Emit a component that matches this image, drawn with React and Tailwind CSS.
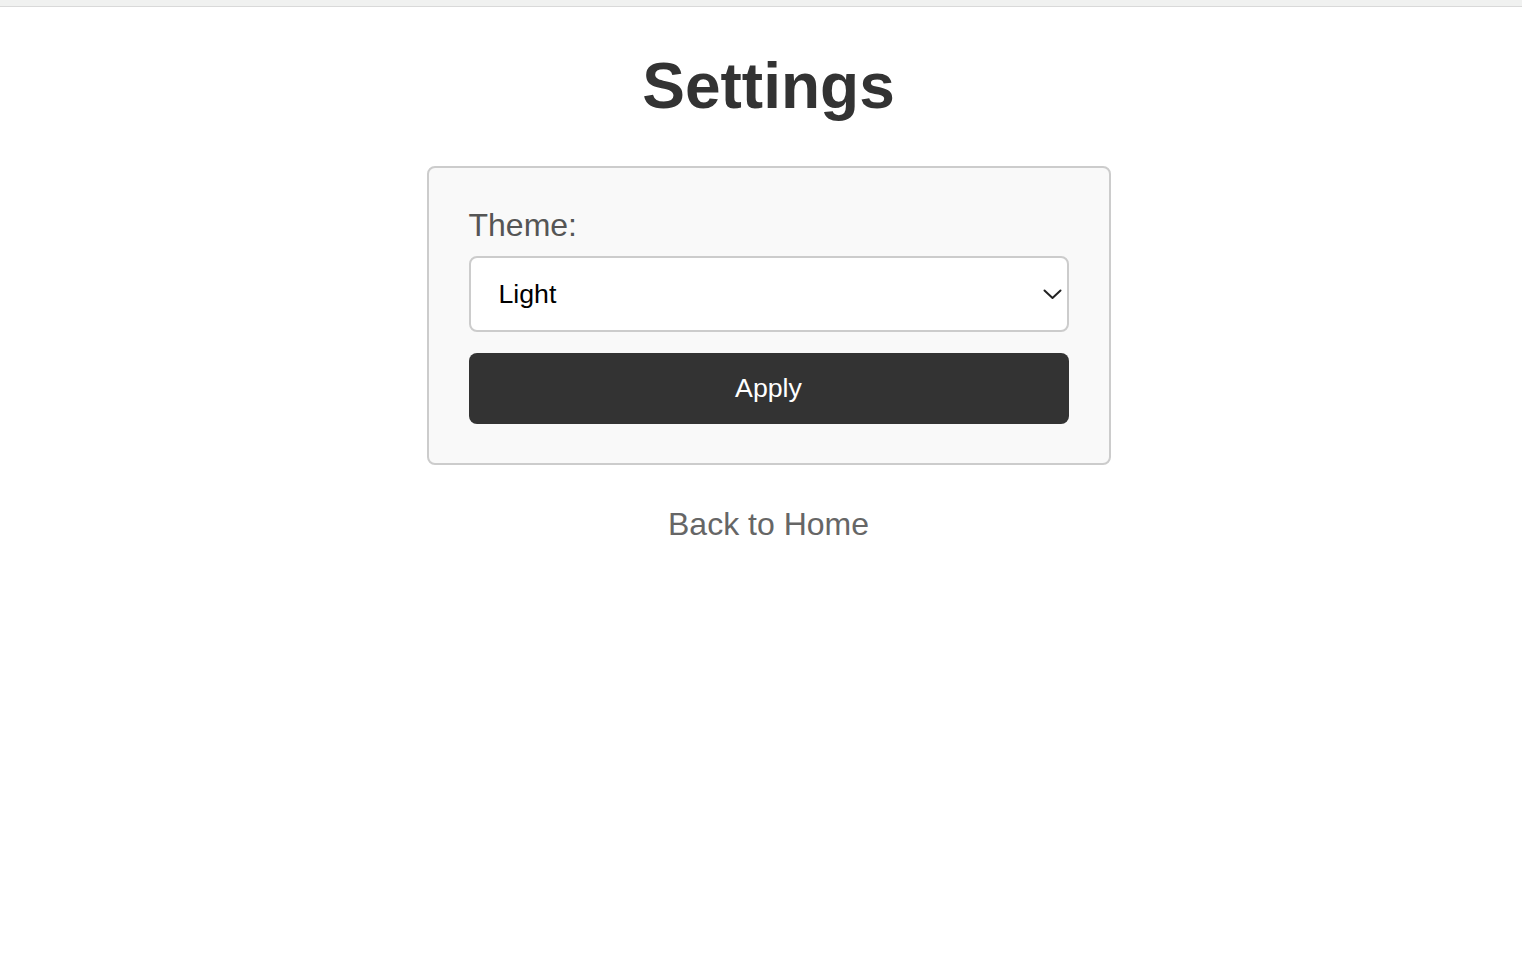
export default function App() {
  return (
    <div className="min-h-[958px] bg-white" style={{ fontFamily: '"Liberation Sans", Arial, sans-serif' }}>
      <div className="h-[7px] bg-[#f0f1f0] border-b border-[#d9d9d9]" />
      <div className="flex flex-col items-center pl-[15px]">
        <h1 className="mt-[42px] text-[64px] leading-[74px] font-bold text-[#333333]">Settings</h1>
        <div className="mt-[43px] w-[684px] rounded-[8px] border-2 border-[#cccccc] bg-[#f9f9f9] px-[40px] pt-[39px] pb-[39px] flex flex-col">
          <label className="text-[32px] leading-[37px] text-[#555555]">Theme:</label>
          <div className="relative mt-[12px]">
            <select
              defaultValue="light"
              className="appearance-none w-full h-[76px] rounded-[8px] border-2 border-[#cccccc] bg-white pl-[28px] text-[26.7px] text-black outline-none"
              style={{ fontFamily: '"Liberation Sans", Arial, sans-serif' }}
            >
              <option value="light">Light</option>
              <option value="dark">Dark</option>
            </select>
            <svg className="absolute right-[7px] top-[33px] pointer-events-none" width="19" height="11" viewBox="0 0 19 11" fill="none">
              <path d="M1.5 1.5 L9.5 9 L17.5 1.5" stroke="#222" strokeWidth="2" strokeLinecap="round" strokeLinejoin="round" />
            </svg>
          </div>
          <button className="mt-[21px] h-[71px] w-full rounded-[8px] bg-[#333333] text-white text-[26.7px]">Apply</button>
        </div>
        <a href="#" className="mt-[41px] text-[32px] leading-[37px] text-[#666666] no-underline">Back to Home</a>
      </div>
    </div>
  );
}
